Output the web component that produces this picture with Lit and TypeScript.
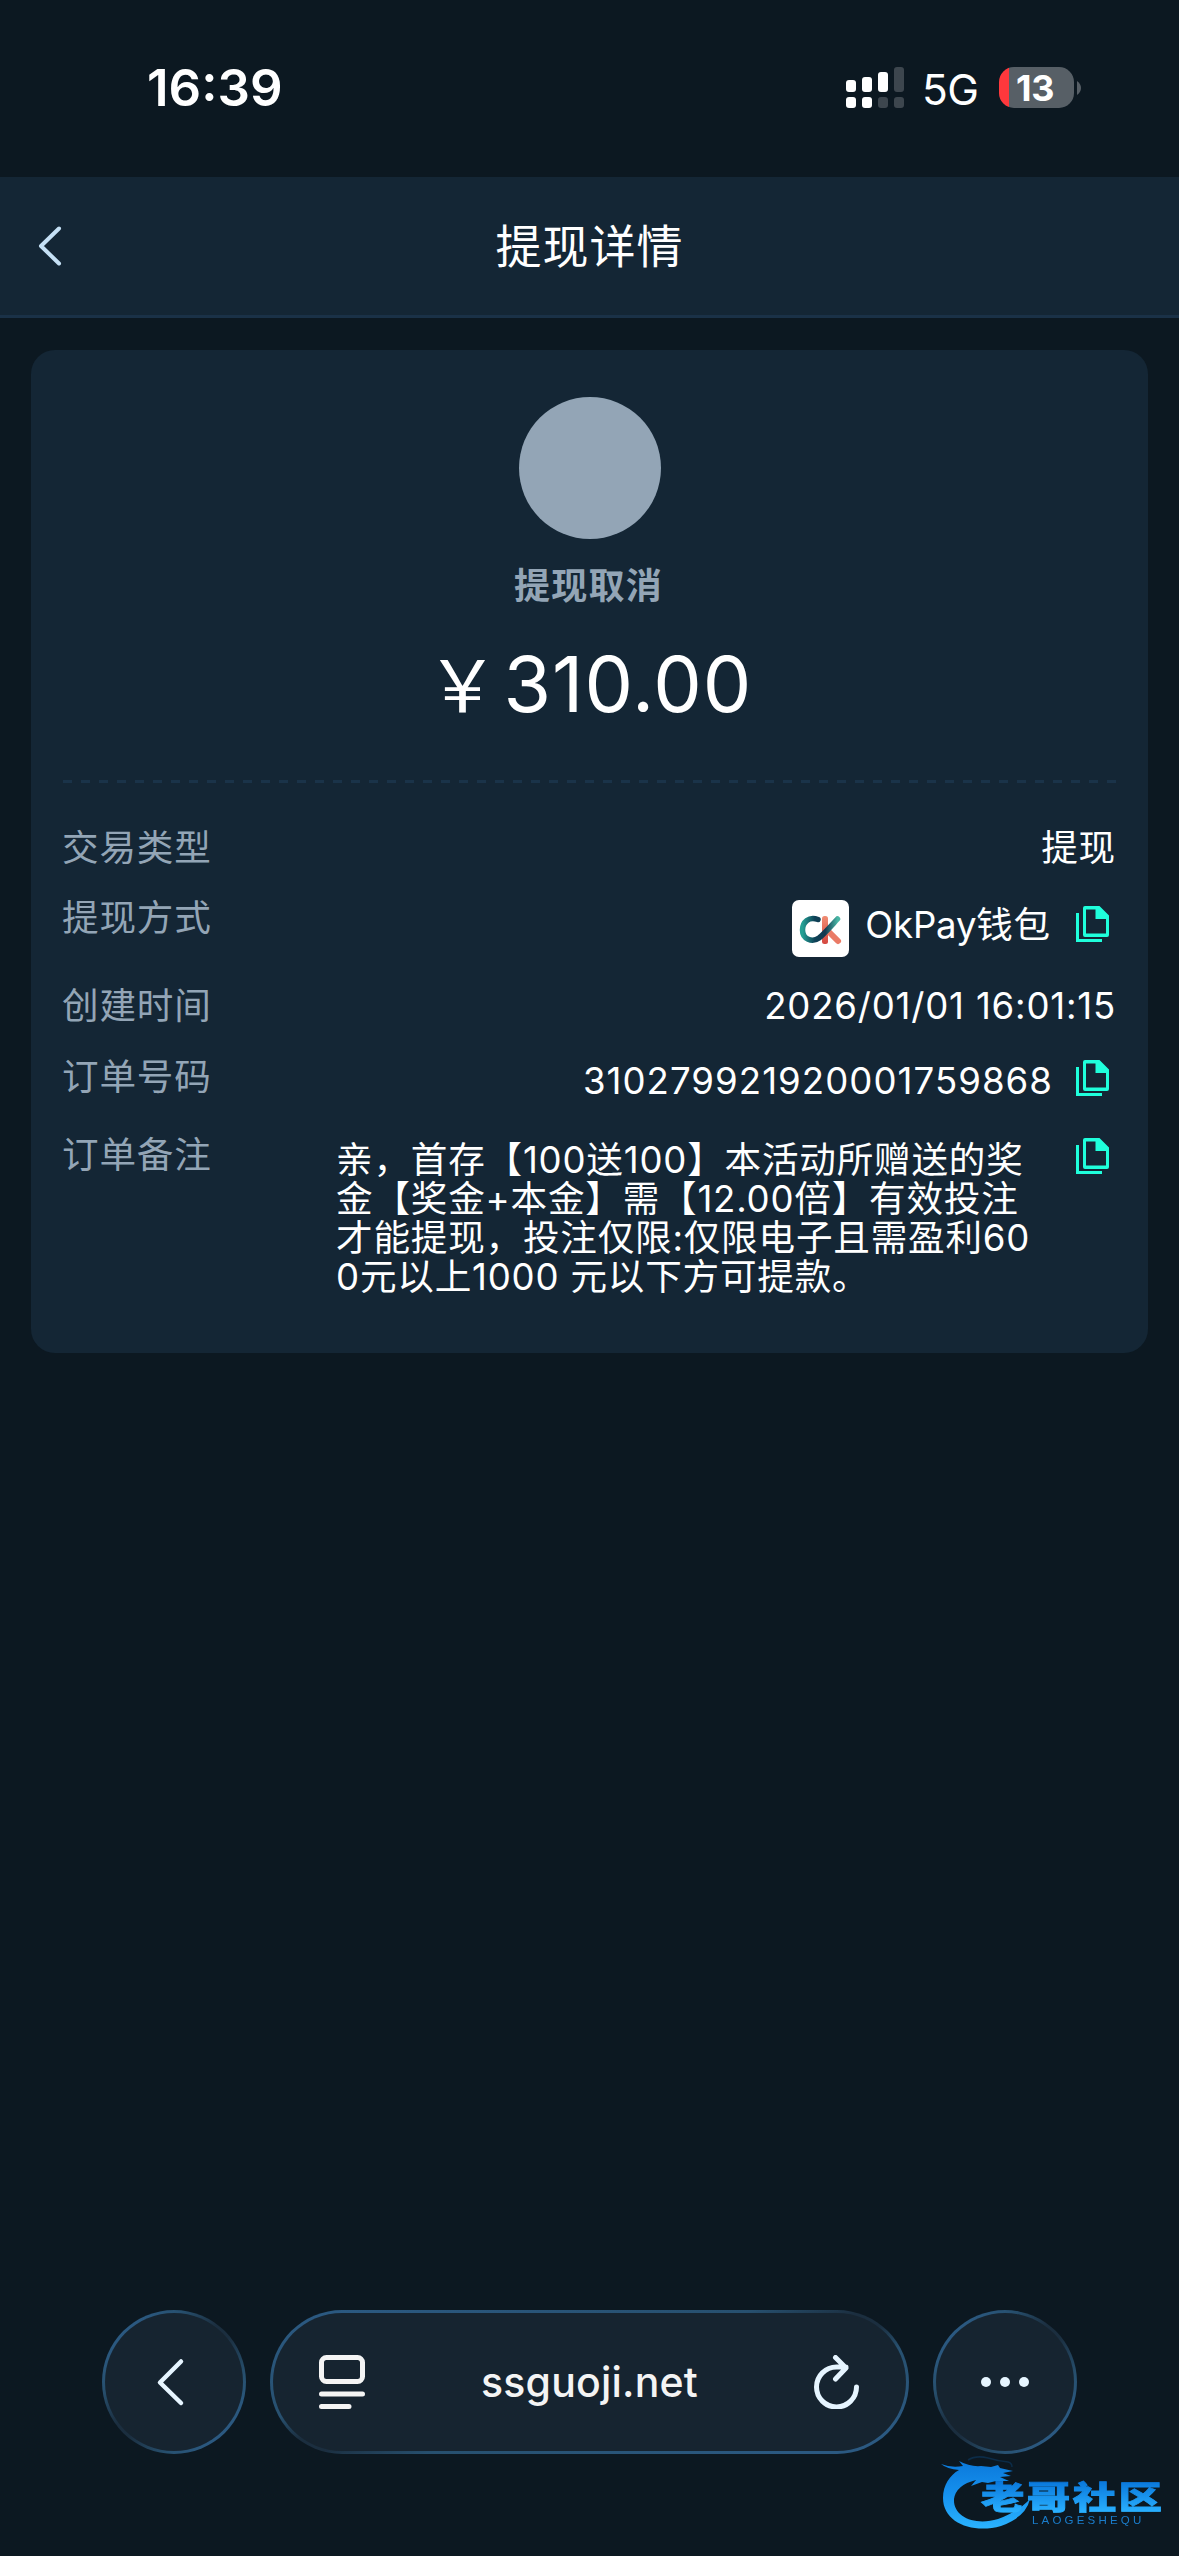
import { LitElement, html, css } from "lit";
import { customElement, property } from "lit/decorators.js";

const copyIcon = html`<svg class="copy" viewBox="0 0 33 36" width="33" height="36">
  <path d="M1.5 7V34.5H26" fill="none" stroke="#1fffdc" stroke-width="3" />
  <path fill="#1fffdc" fill-rule="evenodd" d="M9 0H23.500L33 9.500V29Q33 31 31 31H9Q7 31 7 29V2Q7 0 9 0ZM10 3.500V27.500H30V13H19.500V3.500Z" />
</svg>`;

@customElement("status-bar")
export class StatusBar extends LitElement {
  static styles = css`
    :host { display: flex; height: 177px; box-sizing: border-box; padding: 0 98px 0 147px; justify-content: space-between; align-items: flex-start; color: #fff; font-family: Inter, sans-serif; }
    .time { font-size: 51px; font-weight: 600; line-height: 60px; margin-top: 58px; letter-spacing: 0; }
    .right { display: flex; align-items: center; height: 41px; margin-top: 67px; }
    .five { font-size: 42.500px; line-height: 41px; width: 55px; margin: 3px 22px 0 16px; letter-spacing: -0.500px; }
    .battery { width: 75px; height: 41px; border-radius: 15px; background: linear-gradient(90deg, #ff383c 10px, #575f66 10px); font-size: 36px; font-weight: 700; line-height: 42px; text-align: center; letter-spacing: -0.500px; text-indent: -3px; }
    .nub { margin-left: 3px; }
    svg { display: block; }
  `;
  render() {
    return html`<div class="time">16:39</div>
      <div class="right">
        <svg width="60" height="41" viewBox="0 0 60 41">
          <g fill="#fff"><rect x="0" y="13" width="10" height="12" rx="3" /><rect x="16" y="10" width="10" height="15" rx="3" /><rect x="32" y="5" width="10" height="20" rx="3" /><rect x="0" y="30" width="10" height="11" rx="3" /><rect x="16" y="30" width="10" height="11" rx="3" /></g>
          <g fill="#3d464e"><rect x="48" y="0" width="10" height="25" rx="3" /><rect x="32" y="30" width="10" height="11" rx="3" /><rect x="48" y="30" width="10" height="11" rx="3" /></g>
        </svg>
        <div class="five">5G</div>
        <div class="battery">13</div>
        <svg class="nub" width="4" height="14" viewBox="0 0 4 14"><path d="M0 0Q4 3 4 7T0 14Z" fill="#575f66" /></svg>
      </div>`;
  }
}

@customElement("detail-row")
export class DetailRow extends LitElement {
  @property() label = "";
  static styles = css`
    :host { display: flex; justify-content: space-between; align-items: flex-start; }
    .label { color: #93a5b6; white-space: nowrap; line-height: 40px; margin: 1px 0 0 -1px; }
    .value { display: flex; justify-content: flex-end; }
  `;
  render() {
    return html`<div class="label">${this.label}</div><div class="value"><slot></slot></div>`;
  }
}

@customElement("app-root")
export class AppRoot extends LitElement {
  static styles = css`
    :host { display: flex; flex-direction: column; position: relative; box-sizing: border-box; width: 1179px; height: 2556px; overflow: hidden; background: #0c1821; color: #fff; font-family: Inter, "Noto Sans CJK SC", sans-serif; font-size: 36.600px; letter-spacing: 0.800px; }
    svg { display: block; flex: none; }
    .header { display: grid; grid-template-columns: 61px 1fr 61px; align-items: center; height: 138px; background: #142635; border-bottom: 3px solid #1a3147; }
    .header svg { margin-left: 37px; }
    .title { text-align: center; font-size: 46px; line-height: 60px; letter-spacing: 1px; }
    .card { margin: 32px 31px 0; height: 1003px; box-sizing: border-box; border-radius: 24px; background: #142635; padding: 47px 32px 0; display: flex; flex-direction: column; }
    .disc { width: 142px; height: 142px; border-radius: 50%; background: #93a5b6; align-self: center; }
    .state { color: #93a5b6; text-align: center; font-weight: 700; font-size: 36px; letter-spacing: 1.300px; line-height: 40px; margin: 27px 2px 0 0; }
    .amount { text-align: center; font-size: 77px; line-height: 90px; height: 90px; margin-top: 33px; letter-spacing: 1px; white-space: nowrap; }
    .yen { font-family: "Noto Sans CJK SC", sans-serif; font-size: 72px; letter-spacing: 5px; line-height: 0; }
    .dash { height: 3px; margin-top: 51px; background: repeating-linear-gradient(90deg, #1a3349 0 9px, transparent 9px 18px); }
    .rows { display: flex; flex-direction: column; padding-top: 44px; }
    .r1 { height: 70px; } .r2 { height: 88px; } .r3 { height: 71px; } .r4 { height: 78px; }
    .plain { line-height: 40px; margin-top: 1px; }
    .pay { margin: 3px 16px 0 0; }
    .name { line-height: 57px; margin: 0 25px 0 0; }
    .latin { letter-spacing: -0.200px; }
    .copy { margin-right: 7px; }
    .c2 { margin-top: 9px; } .c4 { margin-top: 4px; } .c5 { margin-top: 4px; }
    .num { margin: 5px 23px 0 0; line-height: 40px; letter-spacing: 1.050px; }
    .note { width: 713px; margin: 7px 27px 0 0; line-height: 39px; white-space: nowrap; }
    .bar { display: flex; justify-content: center; gap: 24px; margin-top: auto; padding-bottom: 102px; }
    .glass { box-sizing: border-box; height: 144px; border-radius: 72px; border: 3px solid transparent; display: flex; align-items: center; justify-content: center; }
    .round { width: 144px; background: linear-gradient(#162430, #162430) padding-box, linear-gradient(135deg, #2b5981 15%, #27506f 28%, #1b2e3f 45%, #1b2e3f 53%, #27506f 72%, #2b5981 85%) border-box; }
    .pill { width: 639px; justify-content: space-between; padding: 0 46px; background: linear-gradient(#162430, #162430) padding-box, linear-gradient(to bottom right, #2b5981 5%, #27506f 38%, #1b2e3f 47%, #1b2e3f 53%, #27506f 62%, #2b5981 90%) border-box; }
    .back { margin-right: 7px; }
    .url { color: #f4f4f4; font-size: 41px; font-weight: 500; letter-spacing: 0.200px; }
    .mark { position: absolute; left: 938px; top: 2452px; filter: blur(0.500px); }
  `;

  render() {
    return html`
      <status-bar></status-bar>
      <div class="header">
        <svg width="26" height="42" viewBox="0 0 26 42"><path d="M22 3.500L4 21L22 38.500" fill="none" stroke="#c5e0f5" stroke-width="4" stroke-linecap="round" stroke-linejoin="round" /></svg>
        <div class="title">提现详情</div>
      </div>
      <div class="card">
        <div class="disc"></div>
        <div class="state">提现取消</div>
        <div class="amount"><span class="yen">${"\uFFE5"}</span>310.00</div>
        <div class="dash"></div>
        <div class="rows">
          <detail-row class="r1" label="交易类型"><div class="plain">提现</div></detail-row>
          <detail-row class="r2" label="提现方式">
            <svg class="pay" width="57" height="57" viewBox="0 0 57 57">
              <defs>
                <linearGradient id="teal" x1="0" y1="0" x2="1" y2="0"><stop offset="0" stop-color="#23a094" /><stop offset="0.35" stop-color="#0e4257" /><stop offset="0.65" stop-color="#12384f" /><stop offset="1" stop-color="#48b5a4" /></linearGradient>
                <linearGradient id="red" x1="0" y1="0" x2="0" y2="1"><stop offset="0" stop-color="#f08d73" /><stop offset="1" stop-color="#d4473f" /></linearGradient>
              </defs>
              <rect width="57" height="57" rx="7" fill="#fff" />
              <rect x="30" y="16" width="6" height="28" rx="2.500" fill="url(#red)" />
              <path d="M36 31L46 41" stroke="#ea7a65" stroke-width="6" stroke-linecap="round" />
              <path d="M26 19.500C17 16 10.500 22 10.500 30C10.500 39 20 43 27 38C32 34 39 26 45.500 19" fill="none" stroke="url(#teal)" stroke-width="5.500" stroke-linecap="round" />
            </svg>
            <div class="name"><span class="latin">OkPay</span>钱包</div><div class="c2">${copyIcon}</div>
          </detail-row>
          <detail-row class="r3" label="创建时间"><div class="plain">2026/01/01 16:01:15</div></detail-row>
          <detail-row class="r4" label="订单号码"><div class="num">310279921920001759868</div><div class="c4">${copyIcon}</div></detail-row>
          <detail-row label="订单备注">
            <div class="note">亲，首存【100送100】本活动所赠送的奖<br />金【奖金+本金】需【12.00倍】有效投注<br />才能提现，投注仅限:仅限电子且需盈利60<br />0元以上1000 元以下方可提款。</div>
            <div class="c5">${copyIcon}</div>
          </detail-row>
        </div>
      </div>
      <div class="bar">
        <div class="glass round"><svg class="back" width="32" height="50" viewBox="0 0 32 50"><path d="M26 4.500L5 25.500L26 46" fill="none" stroke="#e6f5ff" stroke-width="4.500" stroke-linecap="round" stroke-linejoin="round" /></svg></div>
        <div class="glass pill">
          <svg width="46" height="54" viewBox="0 0 46 54" fill="none" stroke="#f4f4f4" stroke-width="5" stroke-linecap="round"><rect x="2.500" y="2.500" width="41" height="24" rx="5" /><path d="M2.500 39H43.500M2.500 51.500H30" /></svg>
          <div class="url">ssguoji.net</div>
          <svg width="46" height="54" viewBox="0 0 46 54" fill="none" stroke="#e6f5ff" stroke-width="5" stroke-linecap="round" stroke-linejoin="round"><path d="M42.500 32A20 20 0 1 1 22.500 12H32M21.500 2.500L32 13L21.500 24" /></svg>
        </div>
        <div class="glass round"><svg width="48" height="10" viewBox="0 0 48 10" fill="#e6f5ff"><circle cx="5" cy="5" r="5" /><circle cx="24" cy="5" r="5" /><circle cx="43" cy="5" r="5" /></svg></div>
      </div>
      <svg class="mark" width="230" height="84" viewBox="0 0 230 84">
        <defs>
          <linearGradient id="blue" gradientUnits="userSpaceOnUse" x1="0" y1="5" x2="0" y2="78"><stop offset="0" stop-color="#0a76d8" /><stop offset="0.5" stop-color="#1590ee" /><stop offset="1" stop-color="#2bb4ff" /></linearGradient>
          <linearGradient id="word" gradientUnits="userSpaceOnUse" x1="0" y1="-27" x2="0" y2="3"><stop offset="0" stop-color="#0a78dc" /><stop offset="1" stop-color="#29b0ff" /></linearGradient>
        </defs>
        <path fill="url(#blue)" d="M3 12Q13 16 25 14L21 9Q32 15 43 14L53 15L60 13L62 16L75 19L65 21L73 24L62 25L71 29L58 29L50 31L44 30L33 34L38 28Q18 33 16 47C15 65 37 74 60 67Q81 59 92 47Q88 65 63 74C35 82 5 71 5 46C5 33 12 23 21 18Q9 17 3 12Z" />
        <path d="M30 8Q38 3 50 6Q60 9 70 10Q74 11 74 15" fill="none" stroke="#0c2c48" stroke-width="1.500" />
        <g transform="translate(43 57) scale(1.36 1)"><text font-family="Noto Sans CJK SC" font-weight="900" font-size="32" fill="url(#word)" stroke="url(#word)" stroke-width="0.800" textLength="134" lengthAdjust="spacing">老哥社区</text></g>
        <text x="94" y="71.500" font-family="Liberation Sans" font-size="11.500" fill="#1a7cca" textLength="110" lengthAdjust="spacing">LAOGESHEQU</text>
      </svg>
    `;
  }
}
